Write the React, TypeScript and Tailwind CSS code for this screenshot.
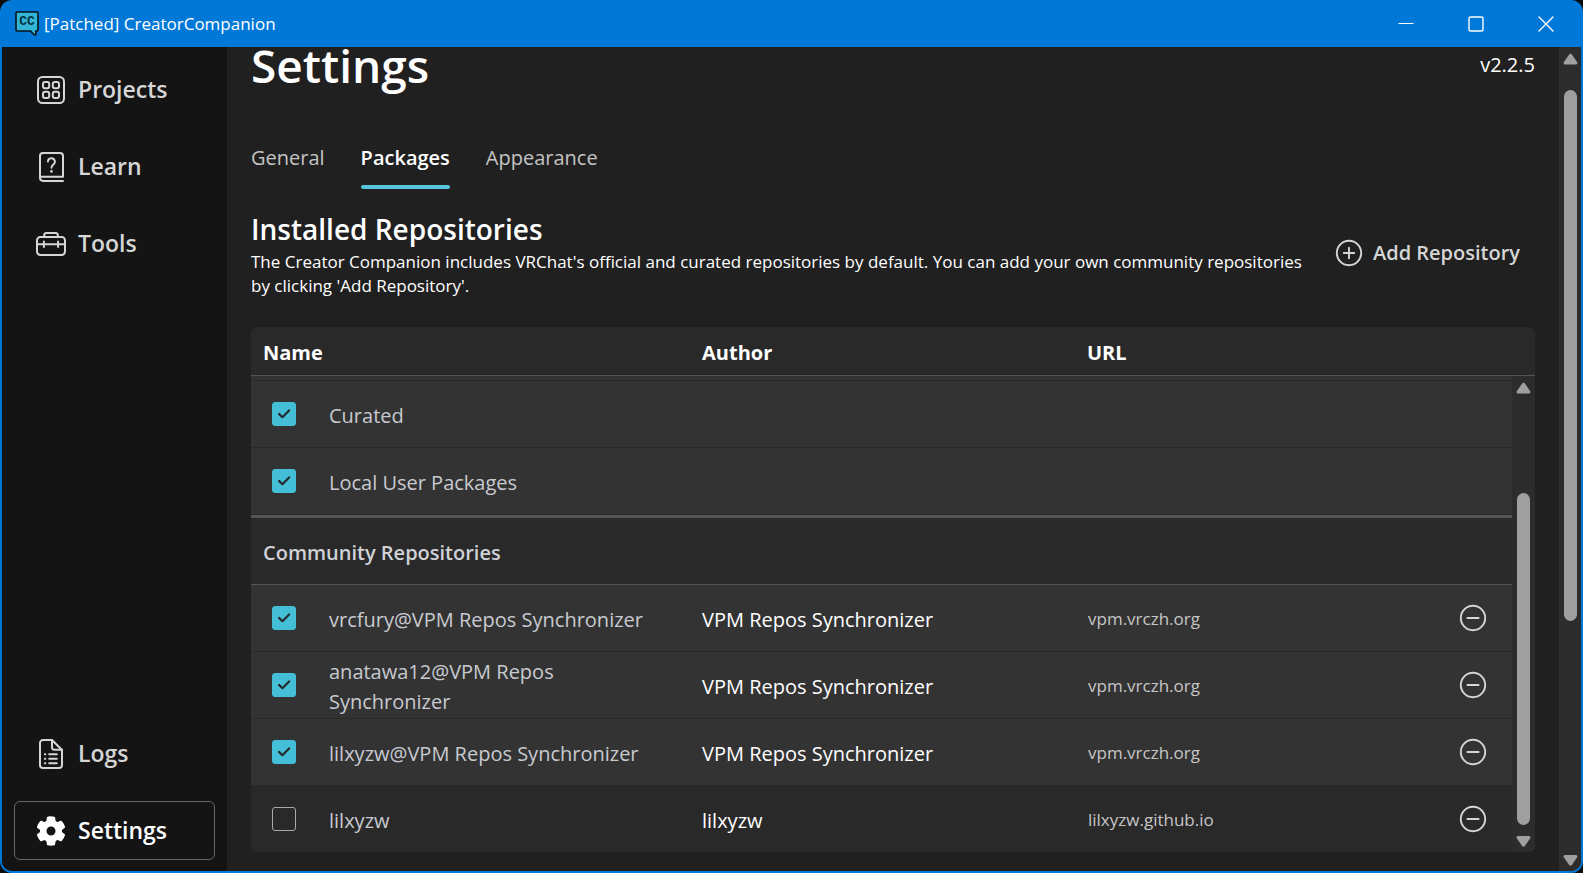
import React, { useState } from 'react';
import clsx from 'clsx';

type Repo = {
  id: string;
  name: string;
  author?: string;
  url?: string;
  enabled: boolean;
};

const BUILT_IN: Repo[] = [
  { id: 'curated', name: 'Curated', enabled: true },
  { id: 'local', name: 'Local User Packages', enabled: true },
];

const COMMUNITY: Repo[] = [
  {
    id: 'vrcfury',
    name: 'vrcfury@VPM Repos Synchronizer',
    author: 'VPM Repos Synchronizer',
    url: 'vpm.vrczh.org',
    enabled: true,
  },
  {
    id: 'anatawa12',
    name: 'anatawa12@VPM Repos Synchronizer',
    author: 'VPM Repos Synchronizer',
    url: 'vpm.vrczh.org',
    enabled: true,
  },
  {
    id: 'lilxyzw-sync',
    name: 'lilxyzw@VPM Repos Synchronizer',
    author: 'VPM Repos Synchronizer',
    url: 'vpm.vrczh.org',
    enabled: true,
  },
  { id: 'lilxyzw', name: 'lilxyzw', author: 'lilxyzw', url: 'lilxyzw.github.io', enabled: false },
];

const GRID = 'grid grid-cols-[439fr_385fr_359fr_78fr] items-center';

const stroke = {
  fill: 'none',
  stroke: 'currentColor',
  strokeLinecap: 'round' as const,
  strokeLinejoin: 'round' as const,
};

function Logo() {
  return (
    <svg viewBox="0 0 24 25" className="h-[25px] w-6">
      <path
        d="M2 1h20a1 1 0 0 1 1 1v17a1 1 0 0 1-1 1h-1.200v3.800h-1.600L15.500 20H2a1 1 0 0 1-1-1V2a1 1 0 0 1 1-1z"
        fill="#33b5d6"
        stroke="#04141a"
        strokeWidth="1.600"
      />
      <text
        x="12"
        y="14"
        textAnchor="middle"
        fontFamily="Liberation Mono, monospace"
        fontWeight="700"
        fontSize="13"
        fill="#06323f"
      >
        CC
      </text>
    </svg>
  );
}

function ProjectsIcon() {
  return (
    <svg viewBox="0 0 30 30" className="size-[30px]" {...stroke} strokeWidth="2">
      <rect x="2" y="2" width="26" height="26" rx="4.500" />
      <rect x="7" y="7" width="6.200" height="6.200" rx="2" />
      <rect x="16.800" y="7" width="6.200" height="6.200" rx="2" />
      <rect x="7" y="16.800" width="6.200" height="6.200" rx="2" />
      <rect x="16.800" y="16.800" width="6.200" height="6.200" rx="2" />
    </svg>
  );
}

function LearnIcon() {
  return (
    <svg viewBox="0 0 30 30" className="size-[30px]" {...stroke} strokeWidth="2">
      <path d="M27 28.900H7a3.100 3.100 0 0 1-3-3.100V4A3 3 0 0 1 7 1h17A3 3 0 0 1 27 4v20.800H4" />
      <path d="M11.900 9.600a3.500 3.500 0 1 1 5.800 2.700c-1.300 1.100-2.200 1.700-2.200 3.500" />
      <circle cx="15.500" cy="19.400" r="1.300" fill="currentColor" stroke="none" />
    </svg>
  );
}

function ToolsIcon() {
  return (
    <svg viewBox="0 0 30 30" className="size-[30px]" {...stroke} strokeWidth="2">
      <rect x="1" y="8" width="28" height="18" rx="3.400" />
      <path d="M8.200 8V6.300A2.300 2.300 0 0 1 10.500 4h9a2.300 2.300 0 0 1 2.300 2.300V8M1 15.200h28M7.900 12.400v5.600M22.100 12.400v5.600" />
    </svg>
  );
}

function LogsIcon() {
  return (
    <svg viewBox="0 0 30 30" className="size-[30px]" {...stroke} strokeWidth="2">
      <path d="M16 1H6.900A2.900 2.900 0 0 0 4 3.900v22.200A2.900 2.900 0 0 0 6.900 29h16.200a2.900 2.900 0 0 0 2.900-2.900V11L16 1z" />
      <path d="M16 1v7.200a2.600 2.600 0 0 0 2.600 2.600H26M13.200 15.200h7.600M13.200 19.700h7.600M13.200 24.200h7.600" />
      <path d="M8.900 15.200h.4M8.900 19.700h.4M8.900 24.200h.4" />
    </svg>
  );
}

function GearIcon() {
  return (
    <svg viewBox="2 2 20 20" className="size-[30px]" fill="currentColor" fillRule="evenodd">
      <path d="M12.012 2.250c.734.008 1.465.093 2.182.253a.75.75 0 0 1 .582.649l.17 1.527a1.384 1.384 0 0 0 1.927 1.116l1.401-.615a.75.75 0 0 1 .849.174 9.792 9.792 0 0 1 2.205 3.792.75.75 0 0 1-.272.825l-1.241.916a1.380 1.380 0 0 0 0 2.226l1.243.915a.75.75 0 0 1 .272.826 9.797 9.797 0 0 1-2.204 3.792.75.75 0 0 1-.848.175l-1.407-.617a1.380 1.380 0 0 0-1.926 1.114l-.169 1.526a.75.75 0 0 1-.572.647 9.518 9.518 0 0 1-4.406 0 .75.75 0 0 1-.572-.647l-.168-1.524a1.382 1.382 0 0 0-1.926-1.110l-1.406.616a.75.75 0 0 1-.849-.175 9.798 9.798 0 0 1-2.204-3.796.75.75 0 0 1 .272-.826l1.243-.916a1.380 1.380 0 0 0 0-2.226l-1.243-.914a.75.75 0 0 1-.271-.826 9.793 9.793 0 0 1 2.204-3.792.75.75 0 0 1 .849-.174l1.400.615a1.387 1.387 0 0 0 1.930-1.118l.170-1.526a.75.75 0 0 1 .583-.650c.717-.159 1.450-.243 2.202-.252zM12 9a3 3 0 1 0 0 6 3 3 0 0 0 0-6z" />
    </svg>
  );
}

function CircleIcon({ plus }: { plus?: boolean }) {
  return (
    <svg viewBox="0 0 28 28" className="size-7" {...stroke} strokeWidth="1.900">
      <circle cx="14" cy="14" r="12.200" />
      <path d={plus ? 'M8.800 14h10.400M14 8.800v10.400' : 'M8.400 14h11.200'} />
    </svg>
  );
}

function NavItem({
  label,
  icon,
  active,
}: {
  label: string;
  icon: React.ReactNode;
  active?: boolean;
}) {
  return (
    <a
      href="#"
      className={clsx(
        'flex h-[59px] items-center gap-3 rounded-md border px-[21px] text-[23px] font-semibold',
        active ? 'border-[#666666] text-white' : 'border-transparent text-[#d6d6d6]'
      )}
    >
      {icon}
      {label}
    </a>
  );
}

// before / thumb / after are the relative lengths along the track
function ScrollBar({
  before,
  thumb,
  after,
  className,
}: {
  before: number;
  thumb: number;
  after: number;
  className?: string;
}) {
  return (
    <div className={clsx('flex shrink-0 flex-col items-center bg-[#2c2c2c] text-[#9f9f9f]', className)}>
      <svg viewBox="0 0 15 27" className="h-[27px] w-[15px] shrink-0" fill="currentColor">
        <path d="M6.100 7.600a1.700 1.700 0 0 1 2.800 0l5.300 7.700a1.400 1.400 0 0 1-1.200 2.200H2a1.400 1.400 0 0 1-1.200-2.200z" />
      </svg>
      <div style={{ flexGrow: before }} />
      <div className="w-[13px] rounded-full bg-[#9f9f9f]" style={{ flexGrow: thumb }} />
      <div style={{ flexGrow: after }} />
      <svg viewBox="0 0 15 27" className="h-[27px] w-[15px] shrink-0" fill="currentColor">
        <path d="M6.100 20.900a1.700 1.700 0 0 0 2.800 0l5.300-7.700a1.400 1.400 0 0 0-1.200-2.200H2a1.400 1.400 0 0 0-1.200 2.200z" />
      </svg>
    </div>
  );
}

function RepoRow({
  repo,
  onToggle,
  last,
}: {
  repo: Repo;
  onToggle: (id: string) => void;
  last?: boolean;
}) {
  return (
    <tr
      className={clsx(
        GRID,
        last ? 'h-[66px]' : 'h-[67px] border-b border-[#292929]',
        repo.enabled ? 'bg-[#333333]' : 'bg-[#292929]'
      )}
    >
      <td className="flex items-center gap-[33px] pr-6 pl-[21px]">
        <span className="relative size-6 shrink-0">
          <input
            id={repo.id}
            type="checkbox"
            checked={repo.enabled}
            onChange={() => onToggle(repo.id)}
            className="block size-6 appearance-none rounded-[3px] border border-[#a8a8a8] checked:border-[#45bfd8] checked:bg-[#45bfd8]"
          />
          {repo.enabled && (
            <svg
              viewBox="0 0 24 24"
              className="pointer-events-none absolute inset-0 size-6 text-[#222b2e]"
              {...stroke}
              strokeWidth="2.200"
            >
              <path d="M7 11.900l3.400 3.300 6.700-6.800" />
            </svg>
          )}
        </span>
        <label htmlFor={repo.id} className="pt-[3px] text-[#c8cad0]">
          {repo.name}
        </label>
      </td>
      <td className="pt-[3px] pl-3 text-white">{repo.author}</td>
      <td className="pt-[2px] pl-[13px] text-[17px] text-[#c6c6c6]">{repo.url}</td>
      <td className="flex justify-center">
        {repo.author && (
          <button aria-label={`Remove ${repo.name}`} className="text-[#d6d6d6]">
            <CircleIcon />
          </button>
        )}
      </td>
    </tr>
  );
}

export default function App() {
  const [repos, setRepos] = useState<Repo[]>([...BUILT_IN, ...COMMUNITY]);
  const [tab, setTab] = useState('Packages');

  const toggle = (id: string) =>
    setRepos((list) => list.map((r) => (r.id === id ? { ...r, enabled: !r.enabled } : r)));

  const builtIn = repos.slice(0, BUILT_IN.length);
  const community = repos.slice(BUILT_IN.length);

  return (
    <div className="h-screen bg-[#0c0c0c] font-['Open_Sans','Noto_Sans',sans-serif]">
      <div className="flex h-full flex-col rounded-xl bg-[#0078d7]">
        {/* Title bar */}
        <header className="flex h-[47px] shrink-0 items-center pr-[2px] pl-[15px] text-white">
          <Logo />
          <span className="ml-[5px] text-[17px]">[Patched] CreatorCompanion</span>
          <div className="ml-auto flex h-full">
            <button aria-label="Minimize" className="flex w-[70px] items-center justify-center">
              <svg viewBox="0 0 16 16" className="size-4" stroke="currentColor">
                <path d="M.5 7.500h15" />
              </svg>
            </button>
            <button aria-label="Maximize" className="flex w-[70px] items-center justify-center">
              <svg viewBox="0 0 16 16" className="size-4" {...stroke} strokeWidth="1.400">
                <rect x="1" y="1" width="14" height="14" rx="1.500" />
              </svg>
            </button>
            <button aria-label="Close" className="flex w-[70px] items-center justify-center">
              <svg viewBox="0 0 16 16" className="size-4" {...stroke} strokeWidth="1.400">
                <path d="M1 1l14 14M15 1L1 15" />
              </svg>
            </button>
          </div>
        </header>

        <div className="mx-[2px] mb-[2px] flex min-h-0 flex-1 rounded-b-[10px] bg-[#202020]">
          <nav className="flex w-[225px] shrink-0 flex-col gap-[18px] rounded-bl-[10px] bg-[#141414] px-3 pt-[13px] pb-[11px]">
            <NavItem label="Projects" icon={<ProjectsIcon />} />
            <NavItem label="Learn" icon={<LearnIcon />} />
            <NavItem label="Tools" icon={<ToolsIcon />} />
            <div className="flex-1" />
            <NavItem label="Logs" icon={<LogsIcon />} />
            <NavItem label="Settings" icon={<GearIcon />} active />
          </nav>

          <main className="min-w-0 flex-1 px-6 text-[20px] leading-[30px]">
            <div className="flex h-9 items-center justify-between text-white">
              <h1 className="text-[46px] leading-9 font-semibold">Settings</h1>
              <span>v2.2.5</span>
            </div>

            <div role="tablist" className="mt-[60px] flex gap-9">
              {['General', 'Packages', 'Appearance'].map((t) => (
                <button
                  key={t}
                  role="tab"
                  aria-selected={t === tab}
                  onClick={() => setTab(t)}
                  className={t === tab ? 'font-semibold text-white' : 'text-[#c4c4c4]'}
                >
                  {t}
                  <span
                    className={clsx(
                      'mt-3 block h-1 rounded-sm',
                      t === tab ? 'bg-[#56c5db]' : 'bg-transparent'
                    )}
                  />
                </button>
              ))}
            </div>

            <div className="mt-[22px] flex items-center justify-between gap-6 text-white">
              <div>
                <h2 className="text-[28px] leading-9 font-semibold">Installed Repositories</h2>
                <p className="mt-[3px] text-[17px] leading-6">
                  The Creator Companion includes VRChat's official and curated repositories by default. You can
                  add your own community repositories by clicking 'Add Repository'.
                </p>
              </div>
              <button className="flex shrink-0 items-center gap-[10px] pr-[15px] pb-[3px] font-semibold text-[#d6d6d6]">
                <CircleIcon plus />
                Add Repository
              </button>
            </div>

            <div className="mt-[29px] overflow-hidden rounded-md bg-[#292929]">
              <div className="flex">
                <table className="block min-w-0 flex-1">
                  <thead className="block border-b border-[#545454]">
                    <tr className={clsx(GRID, 'h-12 text-left text-white')}>
                      <th className="pt-[3px] pl-3 font-bold">Name</th>
                      <th className="pt-[3px] pl-3 font-bold">Author</th>
                      <th className="pt-[3px] pl-3 font-bold">URL</th>
                    </tr>
                  </thead>
                  <tbody className="block">
                    {/* tail of the row scrolled under the header */}
                    <tr aria-hidden="true" className="block h-[5px] border-b border-[#292929] bg-[#333333]" />
                    {builtIn.map((r) => (
                      <RepoRow key={r.id} repo={r} onToggle={toggle} />
                    ))}
                    <tr className="flex h-[70px] items-center border-t-3 border-b border-[#545454]">
                      <th className="pt-[3px] pl-3 font-semibold text-[#d0d2d8]">Community Repositories</th>
                    </tr>
                    {community.map((r, i) => (
                      <RepoRow
                        key={r.id}
                        repo={r}
                        onToggle={toggle}
                        last={i === community.length - 1}
                      />
                    ))}
                  </tbody>
                </table>
                <div className="flex flex-col">
                  <div className="h-[49px] border-b border-[#545454]" />
                  <ScrollBar before={90} thumb={332} after={0} className="w-[23px] flex-1" />
                </div>
              </div>
            </div>
          </main>

          <ScrollBar before={16} thumb={531} after={223} className="w-[22px] rounded-br-[10px]" />
        </div>
      </div>
    </div>
  );
}
